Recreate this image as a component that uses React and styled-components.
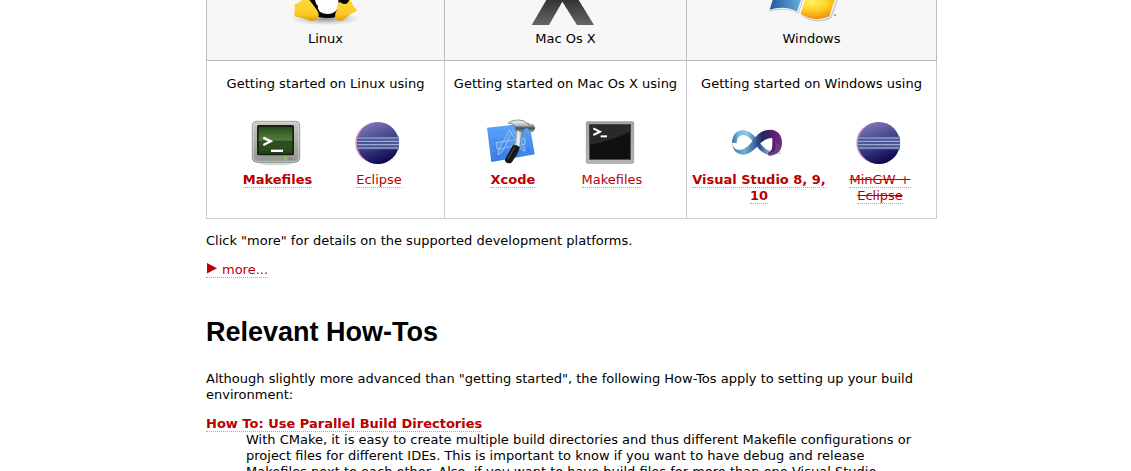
import React from 'react';
import styled, { createGlobalStyle } from 'styled-components';

const GlobalStyle = createGlobalStyle`
  body {
    margin: 0;
    background: #fff;
    color: #000;
    font: 13px/16px "DejaVu Sans", Verdana, sans-serif;
  }
`;

const Page = styled.main`
  padding: 0 194px 0 206px;
`;

const PlatformTable = styled.table`
  width: 100%;
  margin-bottom: 14px;
  table-layout: fixed;
  border-collapse: collapse;
`;

const Column = styled.col`
  width: ${(p) => p.$width}px;
`;

const PlatformHead = styled.th`
  padding: 0 0 13px;
  border: 1px solid #bbb;
  border-top: 0;
  background: #f7f7f7;
  font-weight: normal;
  text-align: center;
`;

const PlatformCell = styled.td`
  padding: 15px 2px 14px;
  border: 1px solid #ccc;
  border-top-color: #bbb;
  text-align: center;
  vertical-align: top;
`;

const Logo = styled.svg`
  display: block;
  width: 96px;
  height: 31px;
  margin: 0 auto;
`;

const Caption = styled.p`
  margin: 0 0 27px;
`;

const Tools = styled.div`
  display: grid;
  grid-template-columns: ${(p) => p.$columns};
`;

const Tool = styled.div`
  display: flex;
  flex-direction: column;
  align-items: center;
  gap: 5px;
`;

const ToolIcon = styled.svg`
  display: block;
  width: 48px;
  height: 48px;
  margin-right: 4px;
  overflow: visible;
`;

const Link = styled.a`
  color: #b90000;
  text-decoration: none;
  border-bottom: 1px dotted #aaa;
  font-weight: ${(p) => (p.$bold ? 'bold' : 'normal')};
`;

const Paragraph = styled.p`
  margin: 13px 0;
`;

const Heading = styled.h1`
  margin: 38px 0 23px;
  font: bold 27px/32px "Liberation Sans", Arial, sans-serif;
`;

const HowTos = styled.dl`
  margin: 13px 0;
`;

const HowToText = styled.dd`
  margin: 0 12px 0 40px;
`;

const Triangle = styled.svg`
  width: 11px;
  height: 11px;
  margin-right: 5px;
`;

const LinuxLogo = () => (
  <Logo viewBox="-21 0 288 93" aria-hidden="true">
    <defs>
      <radialGradient id="footShade">
        <stop offset="0" stopColor="#666" stopOpacity="0.7" />
        <stop offset="1" stopColor="#999" stopOpacity="0" />
      </radialGradient>
      <linearGradient id="foot" x2="0" y2="1">
        <stop offset="0" stopColor="#ffd83a" />
        <stop offset="0.7" stopColor="#fbc924" />
        <stop offset="1" stopColor="#d99a08" />
      </linearGradient>
    </defs>
    <ellipse cx="122" cy="57" rx="108" ry="19" fill="url(#footShade)" />
    <path d="M62 0H192L180 30L158 50Q128 58 96 50Z" fill="#050505" />
    <path d="M90 0H160Q166 30 142 40Q122 46 104 35L96 20Z" fill="#fff" />
    <path d="M28 12Q42 12 49 0H77Q86 18 96 31Q107 48 96 58Q83 68 63 58Q49 52 33 50Q25 47 28 37Q32 24 28 12Z" fill="url(#foot)" />
    <path d="M73 -3Q84 0 99 18L98 28Q84 15 73 0Z" fill="#050505" />
    <path d="M157 17Q159 10 165 6Q176 15 185 10Q192 5 192 -4H196Q201 12 207 21Q219 28 213 34Q194 42 182 55Q165 70 152 57Q147 46 155 31Z" fill="url(#foot)" />
    <path d="M165 0H192Q190 12 178 11Q167 9 165 0Z" fill="#050505" />
  </Logo>
);

const MacLogo = () => (
  <Logo viewBox="-21 0 288 93" aria-hidden="true">
    <defs>
      <linearGradient id="macx" x2="0" y2="1">
        <stop offset="0" stopColor="#333" />
        <stop offset="1" stopColor="#666" />
      </linearGradient>
    </defs>
    <path d="M64 0H161L207 75H156L112 5L72 75H20Z" fill="url(#macx)" />
  </Logo>
);

const WindowsLogo = () => (
  <Logo viewBox="-20 0 288 93" aria-hidden="true">
    <defs>
      <linearGradient id="winBlue">
        <stop offset="0" stopColor="#22599c" />
        <stop offset="1" stopColor="#65aedb" />
      </linearGradient>
      <radialGradient id="winGold" cx="0.35" cy="0.1" r="0.9">
        <stop offset="0" stopColor="#fff36a" />
        <stop offset="0.5" stopColor="#ffd11d" />
        <stop offset="1" stopColor="#f18b10" />
      </radialGradient>
    </defs>
    <path d="M5 0H98L84 42Q45 20 -4 35ZM108 0H202L183 53Q140 78 92 48Z" fill="#c8ccd2" />
    <path d="M3 0H95L81 40Q44 18 -6 32ZM104 0H197L179 50Q137 73 87 42Z" fill="#f4f6f8" />
    <path d="M6 0H91L79 35Q43 15 -3 29Z" fill="url(#winBlue)" />
    <path d="M103 0H192L176 49Q134 69 90 42Z" fill="url(#winGold)" />
    <circle cx="193" cy="46" r="3" fill="#888" />
  </Logo>
);

const GreenTerminalIcon = () => (
  <ToolIcon viewBox="0 0 144 144" aria-hidden="true">
    <defs>
      <linearGradient id="crtFrame" x2="0" y2="1">
        <stop offset="0" stopColor="#c9cac6" />
        <stop offset="0.5" stopColor="#aeb0ab" />
        <stop offset="1" stopColor="#92948f" />
      </linearGradient>
      <linearGradient id="crtScreen" x2="0" y2="1">
        <stop offset="0" stopColor="#294a20" />
        <stop offset="0.5" stopColor="#527b3d" />
        <stop offset="0.52" stopColor="#2d4f22" />
        <stop offset="1" stopColor="#23421a" />
      </linearGradient>
    </defs>
    <ellipse cx="72" cy="130" rx="55" ry="9" fill="#bbb" opacity="0.6" />
    <path d="M12 7H132Q143 8 143 19V117Q142 129 130 130H14Q2 129 1 117V19Q2 8 12 7Z" fill="url(#crtFrame)" stroke="#777a74" strokeWidth="2" />
    <path d="M14 10H130Q140 11 140 20V116Q139 126 129 127H15Q5 126 4 116V20Q5 11 14 10Z" fill="none" stroke="#dedfdc" strokeWidth="2" />
    <rect x="15" y="18" width="111" height="91" rx="5" fill="#15200f" />
    <rect x="20" y="24" width="101" height="80" fill="url(#crtScreen)" />
    <path d="M20 35H121M20 43H121M20 51H121M20 59H121M20 75H121M20 83H121M20 91H121" stroke="#79965f" strokeWidth="1" opacity="0.45" />
    <path d="M34 56L56 67L34 78" fill="none" stroke="#fff" strokeWidth="7" />
    <rect x="57" y="92" width="36" height="7" fill="#fff" />
    <circle cx="100" cy="119" r="4" fill="#76d82d" />
    <rect x="109" y="116" width="13" height="6" fill="#858782" />
  </ToolIcon>
);

const EclipseIcon = () => (
  <ToolIcon viewBox="0 0 144 144" aria-hidden="true">
    <defs>
      <linearGradient id="eclipseBall" x1="0.3" y1="0" x2="0.7" y2="1">
        <stop offset="0" stopColor="#7b79b9" />
        <stop offset="0.45" stopColor="#45458c" />
        <stop offset="1" stopColor="#080049" />
      </linearGradient>
    </defs>
    <circle cx="69" cy="72" r="62" fill="#d58ac0" />
    <circle cx="75" cy="72" r="63" fill="url(#eclipseBall)" />
    <rect x="14" y="53" width="124" height="38" fill="#4e5597" />
    <path d="M14 57H138M13 67H139M13 77H139M14 87H138" stroke="#a8bddc" strokeWidth="3" />
  </ToolIcon>
);

const XcodeIcon = () => (
  <ToolIcon viewBox="0 0 144 144" aria-hidden="true">
    <defs>
      <linearGradient id="blueprint" x2="0" y2="1">
        <stop offset="0" stopColor="#5ca7f7" />
        <stop offset="1" stopColor="#3476e3" />
      </linearGradient>
      <linearGradient id="hammer" x2="0" y2="1">
        <stop offset="0" stopColor="#fafafa" />
        <stop offset="0.45" stopColor="#b7bbc0" />
        <stop offset="0.7" stopColor="#42474d" />
        <stop offset="1" stopColor="#a3a7aa" />
      </linearGradient>
      <linearGradient id="hammerNeck">
        <stop offset="0" stopColor="#8d9298" />
        <stop offset="0.5" stopColor="#f4f5f6" />
        <stop offset="1" stopColor="#50555b" />
      </linearGradient>
    </defs>
    <path d="M0 26L127 12L143 106L13 129Z" fill="url(#blueprint)" />
    <path d="M8 32L121 19L135 101L19 121ZM10 53L124 39M14 76L129 61M17 98L132 82M31 29L44 118M55 26L68 114M99 22L113 106" fill="none" stroke="#7db5f8" strokeWidth="1" opacity="0.7" />
    <path d="M69 31L35 92L33 108L46 98L75 39M67 33L105 93L115 96L112 84L76 31M27 71L113 58L115 76L30 90Z" fill="#5a9ff0" fillOpacity="0.6" stroke="#b5d5fa" strokeWidth="2" />
    <path d="M88 26L111 30Q98 56 98 86L79 82Q90 58 88 26Z" fill="url(#hammerNeck)" stroke="#666" strokeWidth="1" />
    <path d="M64 12Q81 -1 109 5L129 19L137 16L144 27L138 38L128 35L122 26L109 29L103 38L88 34Q87 15 64 12Z" fill="url(#hammer)" stroke="#565b62" strokeWidth="2" />
    <path d="M77 80Q78 76 87 79L98 83Q96 95 89 108L75 129Q70 136 59 131Q51 127 55 119Z" fill="#171717" />
    <path d="M82 86L62 121" stroke="#555" strokeWidth="3" />
  </ToolIcon>
);

const BlackTerminalIcon = () => (
  <ToolIcon viewBox="0 0 144 144" aria-hidden="true">
    <defs>
      <linearGradient id="steel" x2="0" y2="1">
        <stop offset="0" stopColor="#a4a4a4" />
        <stop offset="1" stopColor="#b5b5b5" />
      </linearGradient>
    </defs>
    <rect x="1" y="8" width="142" height="125" rx="4" fill="url(#steel)" stroke="#8b8b8b" strokeWidth="2" />
    <rect x="10" y="16" width="124" height="106" fill="#101010" stroke="#555" strokeWidth="2" />
    <path d="M11 78Q83 62 133 38V17H11Z" fill="#292929" />
    <path d="M22 28L42 38L22 48" fill="none" stroke="#fff" strokeWidth="6" />
    <path d="M44 52H63" stroke="#fff" strokeWidth="6" />
  </ToolIcon>
);

const VisualStudioIcon = () => (
  <ToolIcon viewBox="0 0 144 144" aria-hidden="true">
    <defs>
      <linearGradient id="vsLeft" gradientUnits="userSpaceOnUse" x1="-3" x2="147">
        <stop offset="0" stopColor="#34649c" />
        <stop offset="0.12" stopColor="#75b8d8" />
        <stop offset="0.3" stopColor="#8ccbe2" />
        <stop offset="0.55" stopColor="#28558e" />
        <stop offset="0.8" stopColor="#a9c4e2" />
        <stop offset="1" stopColor="#6c3c8c" />
      </linearGradient>
      <linearGradient id="vsRight" gradientUnits="userSpaceOnUse" x1="-3" x2="147">
        <stop offset="0" stopColor="#3d74a8" />
        <stop offset="0.25" stopColor="#6cb5d6" />
        <stop offset="0.45" stopColor="#4268a2" />
        <stop offset="0.6" stopColor="#252664" />
        <stop offset="0.8" stopColor="#4f1f6a" />
        <stop offset="1" stopColor="#762c83" />
      </linearGradient>
    </defs>
    <path d="M4 72Q6 41 30 41Q48 41 68 66Q90 100 112 102" fill="none" stroke="url(#vsLeft)" strokeWidth="14" />
    <path d="M-3 70Q-1 92 18 93Q42 92 60 64Q80 32 111 32Q146 34 147 71Q146 107 108 110L104 102Q118 98 118 78V57Q96 58 78 77Q52 107 30 107Q-1 105 -3 70Z" fill="url(#vsRight)" />
    <path d="M118 57Q133 73 126 92Q120 101 104 102L108 110Q140 108 145 84Z" fill="#70418e" opacity="0.8" />
    <path d="M136 103H144" stroke="#888" strokeWidth="2" />
  </ToolIcon>
);

const platforms = [
  {
    name: 'Linux',
    width: 238,
    columns: '137px 66px',
    Logo: LinuxLogo,
    tools: [
      { label: 'Makefiles', Icon: GreenTerminalIcon, bold: true },
      { label: 'Eclipse', Icon: EclipseIcon },
    ],
  },
  {
    name: 'Mac Os X',
    width: 242,
    columns: '132px 66px',
    Logo: MacLogo,
    tools: [
      { label: 'Xcode', Icon: XcodeIcon, bold: true },
      { label: 'Makefiles', Icon: BlackTerminalIcon },
    ],
  },
  {
    name: 'Windows',
    width: 250,
    columns: '140px 102px',
    Logo: WindowsLogo,
    tools: [
      { label: 'Visual Studio 8, 9, 10', Icon: VisualStudioIcon, bold: true },
      { label: 'MinGW + Eclipse', Icon: EclipseIcon, retired: true },
    ],
  },
];

export default function App() {
  return (
    <>
      <GlobalStyle />
      <Page>
        <PlatformTable>
          <colgroup>
            {platforms.map((p) => (
              <Column key={p.name} $width={p.width} />
            ))}
          </colgroup>
          <thead>
            <tr>
              {platforms.map((p) => (
                <PlatformHead key={p.name} scope="col">
                  <p.Logo />
                  {p.name}
                </PlatformHead>
              ))}
            </tr>
          </thead>
          <tbody>
            <tr>
              {platforms.map((p) => (
                <PlatformCell key={p.name}>
                  <Caption>Getting started on {p.name} using</Caption>
                  <Tools $columns={p.columns}>
                    {p.tools.map(({ label, Icon, bold, retired }) => (
                      <Tool key={label}>
                        <Icon />
                        <span>
                          <Link href="#" $bold={bold}>
                            {retired ? <s>{label}</s> : label}
                          </Link>
                        </span>
                      </Tool>
                    ))}
                  </Tools>
                </PlatformCell>
              ))}
            </tr>
          </tbody>
        </PlatformTable>
        <Paragraph>Click "more" for details on the supported development platforms.</Paragraph>
        <Paragraph>
          <Link href="#">
            <Triangle viewBox="0 0 11 11" aria-hidden="true">
              <path d="M1 0L11 5.3L1 10.6Z" fill="#b90000" />
            </Triangle>
            more...
          </Link>
        </Paragraph>
        <Heading>Relevant How-Tos</Heading>
        <Paragraph>
          Although slightly more advanced than "getting started", the following How-Tos apply to
          setting up your build environment:
        </Paragraph>
        <HowTos>
          <dt>
            <Link href="#" $bold>
              How To: Use Parallel Build Directories
            </Link>
          </dt>
          <HowToText>
            With CMake, it is easy to create multiple build directories and thus different Makefile
            configurations or project files for different IDEs. This is important to know if you
            want to have debug and release Makefiles next to each other. Also, if you want to have
            build files for more than one Visual Studio
          </HowToText>
        </HowTos>
      </Page>
    </>
  );
}
